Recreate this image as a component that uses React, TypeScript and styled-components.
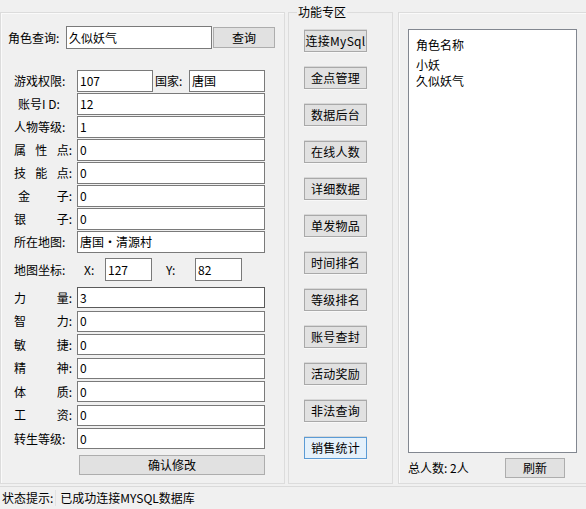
import React from 'react';
import styled, { createGlobalStyle } from 'styled-components';

const GlobalStyle = createGlobalStyle`
  body {
    margin: 0;
    background: #f0f0f0;
    font-family: "Noto Sans CJK SC", "DejaVu Sans", sans-serif;
    font-size: 12px;
    color: #000;
  }
  * { box-sizing: border-box; }
`;

const Window = styled.div`
  width: 586px;
  height: 509px;
  display: flex;
  flex-direction: column;
  background: #f0f0f0;
  overflow: hidden;
`;

const Main = styled.div`
  display: flex;
  height: 486px;
`;

const Group = styled.div<{ $width: number; $gap?: number }>`
  width: ${p => p.$width}px;
  height: 472px;
  margin-top: 12px;
  margin-right: ${p => p.$gap ?? 0}px;
  border: 1px solid #dcdcdc;
  box-shadow: inset 1px 1px 0 #fafafa;
  flex-shrink: 0;
`;

const LeftGroup = styled(Group)`
  padding: 13px 0 0 6px;
`;

const FuncGroup = styled.fieldset`
  width: 105px;
  height: 479px;
  margin: 5px 5px 0 0;
  padding: 11px 0 0 15px;
  border: 1px solid #dcdcdc;
  flex-shrink: 0;
  display: flex;
  flex-direction: column;
  gap: 15px;
`;

const Legend = styled.legend`
  margin-left: -7px;
  padding: 0 1px;
  line-height: 14px;
  font-size: 12px;
`;

const RightGroup = styled(Group)`
  padding: 16px 0 0 9px;
`;

const Text = styled.span<{ $w?: number; $ml?: number }>`
  display: inline-block;
  width: ${p => (p.$w ? `${p.$w}px` : 'auto')};
  margin-left: ${p => p.$ml ?? 0}px;
  line-height: 14px;
  white-space: pre;
  flex-shrink: 0;
`;

const Label = styled.span<{ $w?: number; $pl?: number }>`
  display: flex;
  justify-content: space-between;
  width: ${p => p.$w ?? 58}px;
  padding-left: ${p => p.$pl ?? 0}px;
  line-height: 14px;
  flex-shrink: 0;
`;

const Input = styled.div<{ $w: number; $h?: number; $dark?: boolean; $ml?: number }>`
  width: ${p => p.$w}px;
  height: ${p => p.$h ?? 22}px;
  margin-left: ${p => p.$ml ?? 0}px;
  background: #fff;
  border: 1px solid ${p => (p.$dark ? '#5a5a5a' : '#7a7a7a')};
  padding: 0 2px;
  display: flex;
  align-items: center;
  line-height: 14px;
  white-space: nowrap;
  overflow: hidden;
  flex-shrink: 0;
`;

const Button = styled.div<{ $w: number; $h: number; $focus?: boolean }>`
  width: ${p => p.$w}px;
  height: ${p => p.$h}px;
  background: ${p => (p.$focus ? '#e5f1fb' : '#e1e1e1')};
  border: 1px solid ${p => (p.$focus ? '#3c7fb1' : '#adadad')};
  display: flex;
  align-items: center;
  justify-content: center;
  line-height: 14px;
  flex-shrink: 0;
`;

const QueryButton = styled(Button)`
  margin-left: 1px;
`;

const FuncButton = styled(Button)`
  box-shadow: 0 1px 0 #f8f8f8, 0 -1px 0 #d8d8d8;
  border-color: ${p => (p.$focus ? '#5b9bd5' : '#a9a9a9')};
  letter-spacing: 0.3px;
`;

const QueryRow = styled.div`
  display: flex;
  align-items: center;
  height: 23px;
  margin-left: 1px;
`;

const Form = styled.div`
  margin-top: 21px;
  padding-left: 7px;
  display: flex;
  flex-direction: column;
`;

const Row = styled.div<{ $mt?: number; $h?: number }>`
  display: flex;
  align-items: center;
  height: ${p => p.$h ?? 22}px;
  margin-top: ${p => p.$mt ?? 1}px;
  gap: 5px;
`;

const ConfirmButton = styled(Button)`
  margin: 6px 0 0 65px;
`;

const ListBox = styled.div`
  width: 169px;
  height: 424px;
  background: #fff;
  border: 1px solid #828790;
  padding: 7px 0 0 7px;
  display: flex;
  flex-direction: column;
`;

const ListHeader = styled.div`
  line-height: 16px;
  height: 20px;
`;

const ListItem = styled.div`
  line-height: 16px;
`;

const Footer = styled.div`
  display: flex;
  align-items: center;
  height: 20px;
  margin-top: 5px;
  width: 157px;
  justify-content: space-between;
`;

const StatusBar = styled.div`
  height: 23px;
  border-top: 1px solid #dadada;
  display: flex;
  align-items: center;
  padding-left: 2px;
`;

const StatusMessage = styled.span`
  margin-left: 2px;
  padding-left: 4px;
  border-left: 1px solid #e2e2e2;
  line-height: 16px;
`;

const stats: { label: string[]; value: string; dark?: boolean }[] = [
  { label: ['力', '量:'], value: '3', dark: true },
  { label: ['智', '力:'], value: '0' },
  { label: ['敏', '捷:'], value: '0' },
  { label: ['精', '神:'], value: '0' },
  { label: ['体', '质:'], value: '0' },
  { label: ['工', '资:'], value: '0' },
  { label: ['转生等级:'], value: '0' },
];

const basics: { label: string[]; value: string; pl?: number }[] = [
  { label: ['账号I D:'], value: '12', pl: 4 },
  { label: ['人物等级:'], value: '1' },
  { label: ['属', '性', '点:'], value: '0' },
  { label: ['技', '能', '点:'], value: '0' },
  { label: ['金', '子:'], value: '0', pl: 4 },
  { label: ['银', '子:'], value: '0' },
  { label: ['所在地图:'], value: '唐国・清源村' },
];

const functions = [
  '连接MySql', '金点管理', '数据后台', '在线人数', '详细数据', '单发物品',
  '时间排名', '等级排名', '账号查封', '活动奖励', '非法查询', '销售统计',
];

const roles = ['小妖', '久似妖气'];

const App: React.FC = () => {
  return (
    <>
      <GlobalStyle />
      <Window>
        <Main>
          <LeftGroup $width={285} $gap={3}>
            <QueryRow>
              <Text $w={58}>角色查询:</Text>
              <Input $w={146} $h={23}>久似妖气</Input>
              <QueryButton $w={62} $h={21}>查询</QueryButton>
            </QueryRow>

            <Form>
              <Row $mt={0}>
                <Label><span>游戏权限:</span></Label>
                <Input $w={76}>107</Input>
                <Text $w={34} $ml={-3}>国家:</Text>
                <Input $w={76} $ml={-5}>唐国</Input>
              </Row>
              {basics.map(b => (
                <Row key={b.label.join('')}>
                  <Label $pl={b.pl}>
                    {b.label.map(c => <span key={c}>{c}</span>)}
                  </Label>
                  <Input $w={188}>{b.value}</Input>
                </Row>
              ))}

              <Row $mt={5} $h={23}>
                <Label><span>地图坐标:</span></Label>
                <Text $w={16} $ml={7}>X:</Text>
                <Input $w={47} $h={23}>127</Input>
                <Text $w={24} $ml={9}>Y:</Text>
                <Input $w={47} $h={23}>82</Input>
              </Row>

              {stats.map((s, i) => (
                <Row key={s.label.join('')} $h={21} $mt={i === 0 ? 6 : 2.5}>
                  <Label>
                    {s.label.map(c => <span key={c}>{c}</span>)}
                  </Label>
                  <Input $w={188} $h={21} $dark={s.dark}>{s.value}</Input>
                </Row>
              ))}

              <ConfirmButton $w={186} $h={20}>确认修改</ConfirmButton>
            </Form>
          </LeftGroup>

          <FuncGroup>
            <Legend>功能专区</Legend>
            {functions.map((f, i) => (
              <FuncButton key={f} $w={63} $h={22} $focus={i === functions.length - 1}>
                {f}
              </FuncButton>
            ))}
          </FuncGroup>

          <RightGroup $width={189}>
            <ListBox>
              <ListHeader>角色名称</ListHeader>
              {roles.map(r => <ListItem key={r}>{r}</ListItem>)}
            </ListBox>
            <Footer>
              <Text>总人数: 2人</Text>
              <Button $w={60} $h={20}>刷新</Button>
            </Footer>
          </RightGroup>
        </Main>

        <StatusBar>
          <Text>状态提示:</Text>
          <StatusMessage>已成功连接MYSQL数据库</StatusMessage>
        </StatusBar>
      </Window>
    </>
  );
};

export default App;
